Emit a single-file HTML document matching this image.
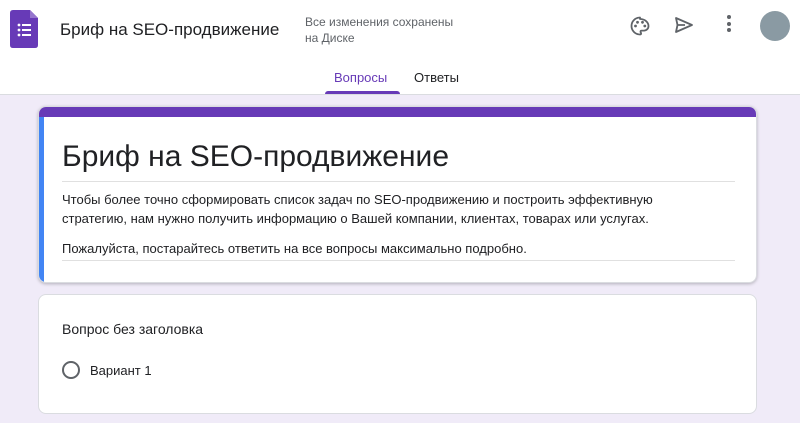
<!DOCTYPE html>
<html><head><meta charset="utf-8"><style>
*{margin:0;padding:0;box-sizing:border-box}
body{width:800px;height:423px;overflow:hidden;background:#f0ebf8;font-family:"Liberation Sans",sans-serif;color:#202124;position:relative}
.hdr{position:absolute;left:0;top:0;width:800px;height:95px;background:#fff;border-bottom:1px solid #dadce0}
.abs{position:absolute;white-space:nowrap}
.card{position:absolute;left:38px;width:719px;background:#fff;border-radius:8px;border:1px solid #dadce0}
</style></head><body>
<div class="hdr">
 <svg class="abs" style="left:10px;top:10px" width="30" height="38" viewBox="0 0 30 38">
  <path d="M3 0H20L28 8V35Q28 38 25 38H3Q0 38 0 35V3Q0 0 3 0Z" fill="#673ab7"/>
  <path d="M20 0V8H28Z" fill="#9575cd"/>
  <g fill="#fff"><circle cx="9" cy="15" r="1.4"/><circle cx="9" cy="20" r="1.4"/><circle cx="9" cy="25" r="1.4"/>
  <rect x="12" y="14" width="9" height="2"/><rect x="12" y="19" width="9" height="2"/><rect x="12" y="24" width="9" height="2"/></g>
 </svg>
 <div class="abs" style="left:60px;top:20px;font-size:17px;color:#202124">Бриф на SEO-продвижение</div>
 <div class="abs" style="left:305px;top:14px;font-size:12px;color:#5f6368;line-height:16px">Все изменения сохранены<br>на Диске</div>
 <svg class="abs" style="left:628px;top:14px" width="24" height="24" viewBox="0 0 24 24"><path fill="none" stroke="#5f6368" stroke-width="1.8" stroke-linejoin="round" d="M12 3.5C7.3 3.5 3.5 7.3 3.5 12S7.3 20.5 12 20.5c.7 0 1.1-.5 1.1-1.1 0-.3-.1-.6-.3-.8-.2-.2-.3-.5-.3-.8 0-.7.5-1.2 1.2-1.2H16c2.5 0 4.5-2 4.5-4.5 0-3.9-3.8-7.1-8.5-7.1z"/><circle fill="#5f6368" cx="7.5" cy="12" r="1.4"/><circle fill="#5f6368" cx="9.5" cy="8.3" r="1.4"/><circle fill="#5f6368" cx="14.5" cy="8.3" r="1.4"/><circle fill="#5f6368" cx="16.8" cy="12" r="1.4"/></svg>
 <svg class="abs" style="left:672px;top:13px" width="24" height="24" viewBox="0 0 24 24"><path fill="none" stroke="#5f6368" stroke-width="1.8" stroke-linejoin="round" d="M4 5l16 7-16 7 1.5-7zM5.5 12H13"/></svg>
 <div class="abs" style="left:727px;top:15px;width:4px">
  <div style="width:4px;height:4px;border-radius:50%;background:#5f6368;margin-bottom:2.5px"></div>
  <div style="width:4px;height:4px;border-radius:50%;background:#5f6368;margin-bottom:2.5px"></div>
  <div style="width:4px;height:4px;border-radius:50%;background:#5f6368"></div></div>
 <div class="abs" style="left:760px;top:11px;width:30px;height:30px;border-radius:50%;background:#8a9aa3"></div>
 <div class="abs" style="left:334px;top:70px;font-size:13px;color:#673ab7">Вопросы</div>
 <div class="abs" style="left:325px;top:91px;width:75px;height:3px;background:#673ab7;border-radius:3px 3px 0 0"></div>
 <div class="abs" style="left:414px;top:70px;font-size:13px;color:#202124">Ответы</div>
</div>
<div class="card" style="top:106px;height:177px;overflow:hidden;box-shadow:0 1px 3px rgba(0,0,0,.25)">
 <div class="abs" style="left:0;top:0;width:719px;height:10px;background:#673ab7"></div>
 <div class="abs" style="left:0;top:10px;width:5px;height:170px;background:#4285f4"></div>
 <div class="abs" style="left:23px;top:33px;font-size:30px;color:#202124">Бриф на SEO-продвижение</div>
 <div class="abs" style="left:23px;top:74px;width:673px;height:1px;background:#e0e0e0"></div>
 <div class="abs" style="left:23px;top:83px;font-size:13px;line-height:19px;color:#202124">Чтобы более точно сформировать список задач по SEO-продвижению и построить эффективную</div>
 <div class="abs" style="left:23px;top:102px;font-size:13px;line-height:19px;color:#202124">стратегию, нам нужно получить информацию о Вашей компании, клиентах, товарах или услугах.</div>
 <div class="abs" style="left:23px;top:132px;font-size:13px;line-height:19px;color:#202124">Пожалуйста, постарайтесь ответить на все вопросы максимально подробно.</div>
 <div class="abs" style="left:23px;top:153px;width:673px;height:1px;background:#e0e0e0"></div>
</div>
<div class="card" style="top:294px;height:120px">
 <div class="abs" style="left:23px;top:26px;font-size:14px;color:#202124">Вопрос без заголовка</div>
 <div class="abs" style="left:23px;top:66px;width:18px;height:18px;border:2px solid #5f6368;border-radius:50%"></div>
 <div class="abs" style="left:51px;top:68px;font-size:13px;color:#202124">Вариант 1</div>
</div>
</body></html>
